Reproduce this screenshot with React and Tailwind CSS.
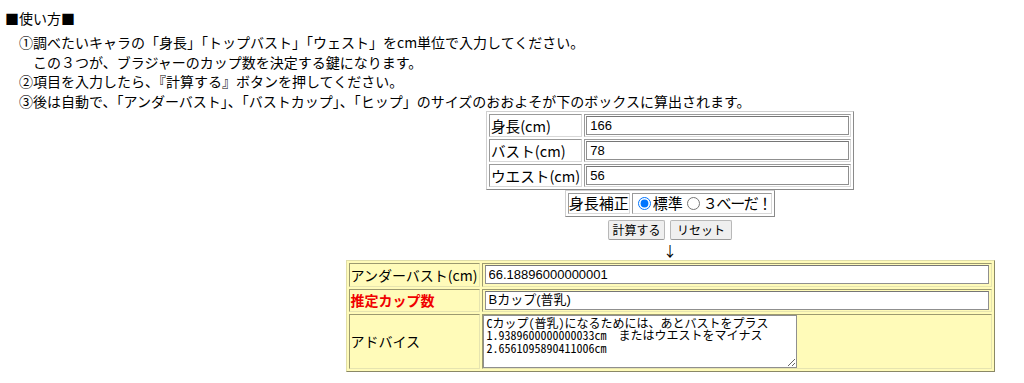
export default function App() {
  const inputCls =
    "block w-full h-[19px] border border-[#8f8f8f] border-t-[#767676] bg-white px-[3px] text-[13px] text-black font-['Liberation_Sans','Noto_Sans_CJK_JP',sans-serif] outline-none";
  const upLabel =
    "border border-t-[#9a9a9a] border-l-[#9a9a9a] border-r-[#d8d8d8] border-b-[#d8d8d8] px-[1px] py-0 h-[23px] text-[14.6px] leading-[20px] whitespace-nowrap";
  const upVal =
    "border border-t-[#9a9a9a] border-l-[#9a9a9a] border-r-[#d8d8d8] border-b-[#d8d8d8] px-[1px] py-[1px]";
  const upTable =
    "border-separate border-spacing-[2px] border border-t-[#d0d0d0] border-l-[#d0d0d0] border-r-[#8a8a8a] border-b-[#8a8a8a]";
  const loCell =
    "border border-t-[#9c9a70] border-l-[#9c9a70] border-r-[#e6e4b0] border-b-[#e6e4b0]";
  return (
    <div className="w-[1024px] h-[383px] overflow-hidden bg-white text-black font-['Noto_Sans_CJK_JP','Noto_Sans',sans-serif]">
      <div className="pl-[5px] pt-[9px] text-[14px] leading-[19.4px]">
        <div className="mb-[5px]">■使い方■</div>
        <div className="whitespace-pre">　①調べたいキャラの「身長」「トップバスト」「ウェスト」をcm単位で入力してください。</div>
        <div className="whitespace-pre">　　この３つが、ブラジャーのカップ数を決定する鍵になります。</div>
        <div className="whitespace-pre">　②項目を入力したら、『計算する』ボタンを押してください。</div>
        <div className="whitespace-pre">　③後は自動で、「アンダーバスト」、「バストカップ」、「ヒップ」のサイズのおおよそが下のボックスに算出されます。</div>
      </div>

      <div className="pl-[316px] flex flex-col items-center">
        <table className={`${upTable} w-[368px]`}>
          <tbody>
            <tr>
              <td className={`${upLabel} w-[88px]`}>身長(cm)</td>
              <td className={upVal}>
                <input readOnly value="166" className={inputCls} />
              </td>
            </tr>
            <tr>
              <td className={upLabel}>バスト(cm)</td>
              <td className={upVal}>
                <input readOnly value="78" className={inputCls} />
              </td>
            </tr>
            <tr>
              <td className={upLabel}>ウエスト(cm)</td>
              <td className={upVal}>
                <input readOnly value="56" className={inputCls} />
              </td>
            </tr>
          </tbody>
        </table>

        <table className={`${upTable} w-[208px]`}>
          <tbody>
            <tr>
              <td className="border border-t-[#9a9a9a] border-l-[#9a9a9a] border-r-[#d8d8d8] border-b-[#d8d8d8] p-0 h-[20px] text-[15px] leading-[18px] whitespace-nowrap w-[61px]">
                身長補正
              </td>
              <td className="border border-t-[#9a9a9a] border-l-[#9a9a9a] border-r-[#d8d8d8] border-b-[#d8d8d8] p-0 h-[20px] text-[15px] leading-[18px] whitespace-nowrap">
                <label className="inline-flex items-center">
                  <input type="radio" name="hosei" defaultChecked className="m-0 ml-[5px] mr-[2px] w-[13px] h-[13px]" />
                  標準
                </label>
                <label className="inline-flex items-center ml-[4px]">
                  <input type="radio" name="hosei" className="m-0 mr-[3px] w-[13px] h-[13px]" />
                  <span className="tracking-[-1.3px]">３べーだ！</span>
                </label>
              </td>
            </tr>
          </tbody>
        </table>

        <div className="flex gap-[5px] mt-[3px]">
          <button className="w-[57px] h-[20px] bg-[#efefef] border border-[#b8b8b8] border-b-[#9a9a9a] rounded-[2px] text-[12px] leading-[16px] text-black">
            計算する
          </button>
          <button className="w-[62px] h-[20px] bg-[#efefef] border border-[#b8b8b8] border-b-[#9a9a9a] rounded-[2px] text-[12px] leading-[16px] text-black">
            リセット
          </button>
        </div>

        <div className="text-[14px] leading-[18px] mt-[1px] h-[19px]">↓</div>

        <table className="border-separate border-spacing-[2px] border border-t-[#e0dea8] border-l-[#e0dea8] border-r-[#8a8866] border-b-[#8a8866] bg-[#fffbb9] w-[649px] text-[14px]">
          <tbody>
            <tr>
              <td className={`${loCell} w-[131px] h-[24px] px-[1px] py-0 leading-[20px] whitespace-nowrap`}>
                アンダーバスト(cm)
              </td>
              <td className={`${loCell} px-[2px] py-[1px]`}>
                <input readOnly value="66.18896000000001" className={inputCls} />
              </td>
            </tr>
            <tr>
              <td className={`${loCell} h-[23px] px-[1px] py-0 leading-[20px] whitespace-nowrap text-[#f00000] font-bold`}>
                推定カップ数
              </td>
              <td className={`${loCell} px-[2px] py-[1px]`}>
                <input readOnly value="Bカップ(普乳)" className={inputCls} />
              </td>
            </tr>
            <tr>
              <td className={`${loCell} h-[55px] px-[1px] py-0 leading-[20px] whitespace-nowrap`}>
                アドバイス
              </td>
              <td className={`${loCell} p-0`}>
                <textarea
                  readOnly
                  value={"Cカップ(普乳)になるためには、あとバストをプラス\n1.9389600000000033cm　またはウエストをマイナス\n2.6561095890411006cm"}
                  className="block w-[314px] h-[53px] border border-[#8f8f8f] bg-white px-[3px] py-[1px] text-[12px] leading-[12.5px] text-black font-['Noto_Sans_Mono_CJK_JP','Noto_Sans_Mono','DejaVu_Sans_Mono',monospace] outline-none overflow-hidden"
                />
              </td>
            </tr>
          </tbody>
        </table>
      </div>
    </div>
  );
}
